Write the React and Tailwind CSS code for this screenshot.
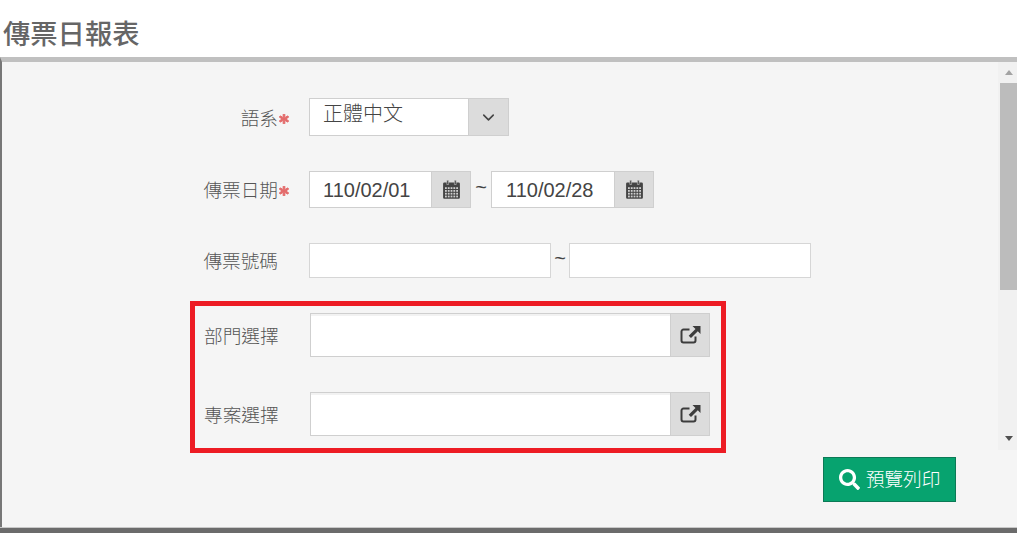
import React from "react";
import { FaAsterisk, FaSearch } from "react-icons/fa";
import { ChevronDown } from "lucide-react";

const font = "font-['Liberation_Sans','Noto_Sans_CJK_TC',sans-serif]";

function CalendarIcon() {
  const xs = [2, 4.8, 7.6, 10.4, 13.2];
  const ys = [7.2, 10, 12.8, 15.6];
  return (
    <svg width="17" height="19" viewBox="0 0 17 19">
      <path d="M1.300 2.500h14.400a1.200 1.200 0 0 1 1.200 1.200v13.900a1.200 1.200 0 0 1-1.200 1.200H1.300a1.200 1.200 0 0 1-1.200-1.200V3.700a1.200 1.200 0 0 1 1.200-1.200Z" fill="#444" />
      <path d="M3.800 0.300h1.800v4.200H3.800zM11.400 0.300h1.800v4.200h-1.800z" fill="#444" stroke="#dcdcdc" strokeWidth="0.5" />
      {ys.map((y) =>
        xs.map((x) => <rect key={`${x}-${y}`} x={x} y={y} width="1.800" height="1.800" fill="#cfcfcf" />)
      )}
    </svg>
  );
}

function ExternalIcon() {
  return (
    <svg width="21" height="18" viewBox="0 0 21 18">
      <path d="M15.500 10.500v4a2 2 0 0 1-2 2H3.500a2 2 0 0 1-2-2V5.500a2 2 0 0 1 2-2H9.500" fill="none" stroke="#3c3c3c" strokeWidth="2" />
      <path d="M12.500 0h8v8l-2.700-2.700-6.800 6.800-2.300-2.300 6.800-6.800Z" fill="#3c3c3c" />
    </svg>
  );
}

function Label({ text, required }) {
  return (
    <div className="w-[307px] pr-[20px] pt-[3px] flex justify-end items-center text-[18.67px] font-light text-[#555] shrink-0">
      <span>{text}</span>
      <span className={required ? "w-[11px] flex justify-end" : "w-[11px]"}>
        {required && <FaAsterisk className="text-[#e36a6a]" size={10} stroke="currentColor" strokeWidth={50} />}
      </span>
    </div>
  );
}

function AddonBox({ width, pad, value, icon }) {
  return (
    <div className={`${width} h-[37px] flex border border-[#cfcfcf] bg-white`}>
      <div className={`${pad} flex-1 flex items-center text-[20px] text-[#444]`}>{value}</div>
      <div className="w-[39px] bg-[#dcdcdc] border-l border-[#cfcfcf] flex items-center justify-center">{icon}</div>
    </div>
  );
}

function Picker({ text }) {
  return (
    <div className="flex items-center">
      <div className="w-[106px] pt-[4px] text-[18.67px] font-light text-[#555]">{text}</div>
      <div className="w-[400px] h-[44px] flex border border-[#cfcfcf] bg-white">
        <div className="flex-1 border-t-2 border-[#f2f2f2]" />
        <div className="w-[39px] bg-[#dcdcdc] border-l border-[#cfcfcf] flex items-center justify-center">
          <ExternalIcon />
        </div>
      </div>
    </div>
  );
}

export default function App() {
  return (
    <div className={`${font} w-[1017px] h-[533px] bg-white flex flex-col overflow-hidden`}>
      <div className="h-[57px] shrink-0 pl-[3px] pt-[17px]">
        <h1 className="text-[27.3px] leading-[36px] font-medium text-[#666]">傳票日報表</h1>
      </div>
      <div className="flex-1 flex flex-col border-t-[5px] border-t-[#c0c0c0] border-l-2 border-l-[#777] bg-[#f5f5f5] min-h-0">
        <div className="h-[388px] flex">
          <div className="flex-1 pt-[36px]">
            <div className="flex items-center h-[38px]">
              <Label text="語系" required />
              <div className="w-[200px] h-[38px] flex border border-[#cfcfcf] bg-white">
                <div className="flex-1 pl-[13px] flex items-center text-[20px] font-light text-[#444] pb-[6px]">正體中文</div>
                <div className="w-[40px] bg-[#dcdcdc] border-l border-[#cfcfcf] flex items-center justify-center">
                  <ChevronDown size={19} color="#444" strokeWidth={2} />
                </div>
              </div>
            </div>
            <div className="flex items-center h-[37px] mt-[35px]">
              <Label text="傳票日期" required />
              <AddonBox width="w-[162px]" pad="pl-[13px]" value="110/02/01" icon={<CalendarIcon />} />
              <span className="w-[20px] text-center text-[20px] text-[#444] pb-[6px]">~</span>
              <AddonBox width="w-[163px]" pad="pl-[14px]" value="110/02/28" icon={<CalendarIcon />} />
            </div>
            <div className="flex items-center h-[35px] mt-[35px]">
              <Label text="傳票號碼" />
              <div className="w-[242px] h-[35px] border border-[#d6d6d6] bg-white" />
              <span className="w-[18px] text-center text-[20px] text-[#444] pb-[6px]">~</span>
              <div className="w-[242px] h-[35px] border border-[#d6d6d6] bg-white" />
            </div>
            <div className="ml-[188px] mt-[23px] w-[536px] h-[152px] border-[5px] border-[#ed1c24] pl-[9px] pt-[7px] flex flex-col gap-[35px]">
              <Picker text="部門選擇" />
              <Picker text="專案選擇" />
            </div>
          </div>
          <div className="w-[19px] shrink-0 bg-[#f1f1f1] flex flex-col items-end">
            <div className="w-[17px] h-[21px] flex items-center justify-center">
              <div className="w-0 h-0 border-x-[4px] border-x-transparent border-b-[5px] border-b-[#a3a3a3]" />
            </div>
            <div className="w-[17px] h-[207px] bg-[#bcbcbc]" />
            <div className="flex-1" />
            <div className="w-[17px] h-[24px] flex items-center justify-center">
              <div className="w-0 h-0 border-x-[4px] border-x-transparent border-t-[5px] border-t-[#505050]" />
            </div>
          </div>
        </div>
        <div className="flex justify-end pr-[61px] pt-[7px]">
          <button className="w-[133px] h-[45px] bg-[#07a36f] border border-[#0b7a56] text-white text-[18.67px] font-light flex items-center justify-center gap-[6px]">
            <FaSearch size={21} />
            <span>預覽列印</span>
          </button>
        </div>
        <div className="flex-1" />
        <div className="h-[6px] border-t border-[#c8c8c8] bg-[#6b6b6b] -ml-[2px]" />
      </div>
    </div>
  );
}
